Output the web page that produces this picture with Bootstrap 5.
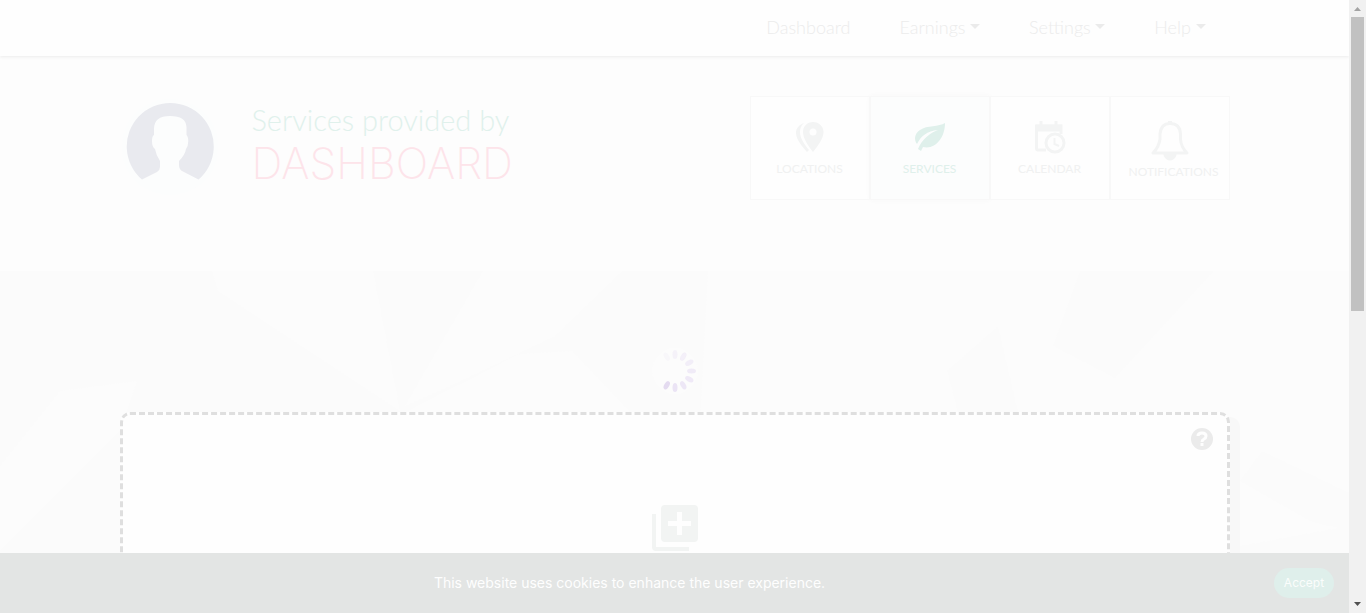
<!DOCTYPE html>
<html lang="en">
<head>
<meta charset="utf-8">
<meta name="viewport" content="width=device-width, initial-scale=1">
<title>Services dashboard</title>
<link href="https://cdn.jsdelivr.net/npm/bootstrap@5.3.0/dist/css/bootstrap.min.css" rel="stylesheet">
<style>
  body { background: #fdfdfd; font-family: Lato, sans-serif; }
  .page-wrap { padding-left: 15px; padding-right: 15px; }
  .top-bar { background: #fefefe; height: 56px; box-shadow: 0 1px 3px #ececec; padding: 0 0 2px; z-index: 2; }
  .top-bar .nav-link { color: #ececec; font-size: 18px; line-height: 24px; font-weight: 300; padding: 0 24px 0 25px; }
  .top-bar .dropdown-toggle::after { border-top: 5px solid #ebebeb; border-left: 5px solid transparent; border-right: 5px solid transparent; }
  .hero { padding-top: 40px; height: 215px; }
  .avatar { width: 100px; height: 100px; }
  .hero-sub { color: #e0f1ec; font-size: 29px; line-height: 32px; font-weight: 300; }
  .hero-title { color: #fde4ea; font-family: Inter, sans-serif; font-size: 43px; line-height: 54px; font-weight: 200; }
  .tile { width: 120px; height: 104px; background: #fefefe; border: 1px solid #f8f8f8; color: #f0f1f1; font-size: 12px; line-height: 20px; text-decoration: none; }
  .tile.active { background: #fcfdfd; color: #dff0eb; box-shadow: 0 0 6px #f8f8f8; }
  .stage { background: #fbfbfb; }
  .facets { position: absolute; inset: 0; width: 100%; height: 342px; }
  .loader { padding: 76px 0 16px; }
  .drop-card { background: #fefefe; border: 3px dashed #dfdfdf; border-radius: 10px; box-shadow: 10px 5px 0 #f8f8f8; height: 420px; }
  .icon-btn { background: none; border: 0; padding: 0; line-height: 0; }
  .help-btn { padding: 13px 14px 0; }
  .add-btn { margin-top: 54px; }
  .cookie-bar { background: #e3e5e4; height: 60px; color: #fefefe; font-size: 14px; font-family: Inter, sans-serif; z-index: 3; padding: 0 15px 0 0; }
  .cookie-text { padding: 0 15px 2px 0; }
  .accept-btn { background: #dfefeb; color: #fbfdfc; width: 60px; height: 30px; border: 0; border-radius: 15px; font-size: 12px; line-height: 18px; padding: 0; }
  .rail { width: 17px; background: #f1f1f1; }
  .rail-arrow { height: 17px; line-height: 0; }
  .rail-thumb { width: 13px; height: 294px; background: #c1c1c1; }
</style>
</head>
<body>
<div class="d-flex vh-100 overflow-hidden">
  <div class="flex-grow-1 position-relative overflow-hidden">
    <nav class="navbar top-bar position-relative">
      <div class="container page-wrap justify-content-end">
        <ul class="nav">
          <li class="nav-item"><a class="nav-link" href="#">Dashboard</a></li>
          <li class="nav-item dropdown"><a class="nav-link dropdown-toggle" href="#" role="button" data-bs-toggle="dropdown">Earnings</a></li>
          <li class="nav-item dropdown"><a class="nav-link dropdown-toggle" href="#" role="button" data-bs-toggle="dropdown">Settings</a></li>
          <li class="nav-item dropdown"><a class="nav-link dropdown-toggle" href="#" role="button" data-bs-toggle="dropdown">Help</a></li>
        </ul>
      </div>
    </nav>

    <header class="hero">
      <div class="container page-wrap d-flex justify-content-between align-items-start">
        <div class="d-flex">
          <svg class="avatar" viewBox="0 0 100 100" aria-hidden="true">
            <circle cx="50" cy="51" r="48" fill="#fcfdfd"/>
            <path d="M22 83.500A43.500 43.500 0 1 1 78.500 83.500L62 75Q59 73 59 69V65Q65 59 66 53Q69 49 68 42Q67 39 66.500 39V31Q66 20 50 20Q34 20 34 33V39Q32 40 32 45Q32 51 35 53Q36 59 40 65V71Q40 74 37 76Z" fill="#e9eaef"/>
          </svg>
          <div class="ms-4 ps-2 pt-2">
            <div class="hero-sub">Services provided by</div>
            <h1 class="hero-title m-0">DASHBOARD</h1>
          </div>
        </div>
        <nav class="d-flex" aria-label="Sections">
          <a href="#" class="tile d-flex flex-column align-items-center pt-4">
            <svg class="mb-1" width="30" height="34" viewBox="0 0 30 34" fill="#f3f4f4" aria-hidden="true">
              <path fill-rule="evenodd" d="M18 1C12 1 8 5.500 8 11C8 18 14 26 18 31C22 26 28.500 18 28.500 11C28.500 5.500 24 1 18 1ZM18 7.500A3.500 3.500 0 1 1 18 14.500A3.500 3.500 0 1 1 18 7.500Z"/>
              <path d="M9 2C4 4 1 7 1 12C1 19 8 26 12 31L14 29C9 23 5 17 5 11C5 7 6 5 9 2Z"/>
            </svg>LOCATIONS</a>
          <a href="#" class="tile active d-flex flex-column align-items-center pt-4">
            <svg class="mb-1" width="32" height="34" viewBox="0 0 32 34" fill="#dff0eb" aria-hidden="true">
              <path d="M31 2C25 6 13 4 6 9C0 13 0 19 3 23C7 15 13 10 24 9C16 12 8 18 4 28L7 30L9 26C21 29 31 17 31 2Z"/>
            </svg>SERVICES</a>
          <a href="#" class="tile d-flex flex-column align-items-center pt-4">
            <svg class="mb-1" width="32" height="34" viewBox="0 0 32 34" fill="none" stroke="#f3f4f4" aria-hidden="true">
              <path d="M12 29H4Q2.500 29 2.500 27V5H27V13" stroke-width="3"/>
              <path d="M2 7H28" stroke-width="7"/><path d="M7 0V4M22 0V4" stroke-width="3"/>
              <circle cx="21" cy="22" r="9" stroke-width="3" fill="#fefefe"/><path d="M20.500 17V23L25 25" stroke-width="2"/>
            </svg>CALENDAR</a>
          <a href="#" class="tile d-flex flex-column align-items-center pt-4">
            <svg width="40" height="41" viewBox="0 0 40 41" fill="none" stroke="#f3f4f4" stroke-width="3" aria-hidden="true">
              <path d="M3 32Q9 26 10 18V13Q11 2.500 20 2.500Q30 2.500 30.500 13V18Q31 26 37 32Z" stroke-linejoin="round"/>
              <path d="M20 0V3" stroke-width="4"/><path d="M14 33A6 6 0 0 0 26 33Z" fill="#f3f4f4" stroke-width="1"/>
            </svg><span class="ps-2">NOTIFICATIONS</span></a>
        </nav>
      </div>
    </header>

    <main class="stage position-relative">
      <svg class="facets" viewBox="0 0 1349 342" preserveAspectRatio="none" fill="#fcfcfc" aria-hidden="true">
        <path d="M212 0H373L400 140L218 20Z M483 0H622L555 65L450 115L405 135Z M520 83L572 80L630 141H405Z M708 0H1349V342H690Z M0 195L60 120L137 110L120 160L0 280Z"/>
        <g fill="#fbfbfb"><path d="M1080 0H1214L1115 107L1053 75Z M998 55L1018 141H958L947 100Z M1240 210L1262 180L1349 222V260L1310 250Z M1240 275L1349 255V342H1240Z"/></g>
      </svg>
      <div class="container page-wrap position-relative">
        <div class="loader text-center lh-1" role="status" aria-label="Loading">
          <svg class="d-block mx-auto" width="48" height="49" viewBox="-24 -24 48 49" fill="#ebe4f5">
            <circle r="23" fill="#fcfcfc"/>
            <ellipse cy="-16.500" rx="2.500" ry="4.500" opacity=".4"/>
            <ellipse cy="-16.500" rx="2.500" ry="4.500" transform="rotate(30)" opacity=".5"/>
            <ellipse cy="-16.500" rx="2.500" ry="4.500" transform="rotate(60)" opacity=".6"/>
            <ellipse cy="-16.500" rx="2.500" ry="4.500" transform="rotate(90)" opacity=".7"/>
            <ellipse cy="-16.500" rx="2.500" ry="4.500" transform="rotate(120)" opacity=".8"/>
            <ellipse cy="-16.500" rx="2.500" ry="4.500" transform="rotate(150)" opacity=".9"/>
            <ellipse cy="-16.500" rx="2.500" ry="4.500" transform="rotate(180)"/>
            <ellipse cy="-16.500" rx="2.500" ry="4.500" transform="rotate(210)" fill="#e4dbf0"/>
            <ellipse cy="-16.500" rx="2.500" ry="4.500" transform="rotate(330)" opacity=".2"/>
          </svg>
        </div>
        <section class="drop-card d-flex flex-column">
          <button type="button" class="icon-btn help-btn align-self-end" aria-label="Help">
            <svg width="22" height="22" viewBox="0 0 22 22"><circle cx="11" cy="11" r="11" fill="#ebebeb"/><path d="M7 8Q7 5 11 5Q15 5 15 8Q15 10 13 11Q11 12 11 14" fill="none" stroke="#fefefe" stroke-width="3"/><rect x="9.500" y="15" width="3" height="3" fill="#fefefe"/></svg>
          </button>
          <button type="button" class="icon-btn add-btn align-self-center" aria-label="Add service">
            <svg width="48" height="48" viewBox="0 0 48 48" fill="#f2f4f3"><path fill-rule="evenodd" d="M14 1H43Q47 1 47 5V34Q47 38 43 38H14Q10 38 10 34V5Q10 1 14 1ZM26 8V17H17V22H26V31H31V22H40V17H31V8Z"/><path d="M1 10H5V43H38V47H5Q1 47 1 43Z"/></svg>
          </button>
        </section>
      </div>
    </main>

    <div class="cookie-bar position-absolute bottom-0 start-0 end-0 d-flex align-items-center">
      <div class="cookie-text flex-grow-1 text-center">This website uses cookies to enhance the user experience.</div>
      <button type="button" class="accept-btn">Accept</button>
    </div>
  </div>

  <div class="rail flex-shrink-0 d-flex flex-column align-items-center" aria-hidden="true">
    <div class="rail-arrow"><svg width="17" height="17"><path d="M5 11H12L8.500 7Z" fill="#a3a3a3"/></svg></div>
    <div class="rail-thumb"></div>
    <div class="rail-arrow mt-auto"><svg width="17" height="17"><path d="M5 6H12L8.500 10Z" fill="#505050"/></svg></div>
  </div>
</div>
<script src="https://cdn.jsdelivr.net/npm/bootstrap@5.3.0/dist/js/bootstrap.bundle.min.js"></script>
</body>
</html>
